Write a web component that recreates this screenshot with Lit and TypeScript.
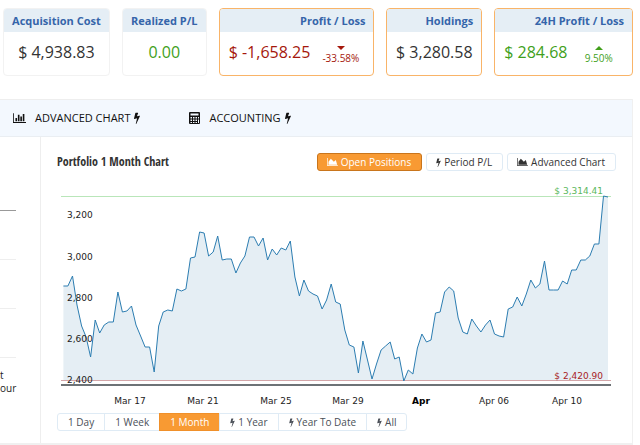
import { LitElement, html, svg, css, nothing } from "lit";
import { customElement, property, state } from "lit/decorators.js";
import { classMap } from "lit/directives/class-map.js";

const BOLT =
  "M885 566q18 20 7 44l-540 1157q-13 25-42 25-4 0-14-2-17-5-25.5-19t-4.5-30l197-808-406 101q-4 1-12 1-18 0-31-11-18-15-13-39l201-825q4-16 16-26t28-10h328q19 0 32 12.5t13 29.5q0 8-5 18l-171 463 396-98q8-2 12-2 19 0 34 15z";

const bolt = html`<svg class="bolt" viewBox="0 0 896 1792" aria-hidden="true"><path d=${BOLT} /></svg>`;
const area = html`<svg class="area" viewBox="0 0 2048 1536" aria-hidden="true">
  <path d="M2048 1408v128H0V0h128v1408zM1664 384l256 896H256V704l448-576 576 576z" />
</svg>`;
const bars = html`<svg class="bars" viewBox="0 0 2048 1536" aria-hidden="true">
  <path d="M2048 1408v128H0V0h128v1408zM384 768h256v512H384zM768 256h256v1024H768zM1152 512h256v768h-256zM1536 128h256v1152h-256z" />
</svg>`;
const calculator = html`<svg class="calc" viewBox="0 0 22 24" aria-hidden="true">
  <path fill-rule="evenodd" d="M2 0h18q2 0 2 2v20q0 2-2 2H2q-2 0-2-2V2q0-2 2-2zM3 3v4h16V3zM3 10v3h3v-3zM8 10v3h3v-3zM13 10v3h3v-3zM18 10v3h2v-3zM3 15v3h3v-3zM8 15v3h3v-3zM13 15v3h3v-3zM3 20v2h3v-2zM8 20v2h3v-2zM13 20v2h3v-2zM18 15v7h2v-7z" />
</svg>`;

interface Stat {
  label: string;
  value: string;
  tone: "plain" | "gain" | "loss";
  change?: string;
  accent?: boolean;
}

const STATS: Stat[] = [
  { label: "Acquisition Cost", value: "$ 4,938.83", tone: "plain" },
  { label: "Realized P/L", value: "0.00", tone: "gain" },
  { label: "Profit / Loss", value: "$ -1,658.25", tone: "loss", change: "-33.58%", accent: true },
  { label: "Holdings", value: "$ 3,280.58", tone: "plain", accent: true },
  { label: "24H Profit / Loss", value: "$ 284.68", tone: "gain", change: "9.50%", accent: true },
];

/* Line heights below the top of the plot, one sample every six hours. */
const SAMPLES = [
  106, 106, 96, 125, 146, 157, 177, 140, 153, 145, 142, 142, 112, 132, 131, 126, 145, 156, 167, 167,
  192, 146, 132, 130, 131, 109, 111, 109, 78, 77, 52, 53, 76, 72, 56, 80, 79, 79, 93, 83,
  76, 57, 57, 66, 58, 80, 69, 75, 68, 70, 61, 97, 116, 100, 111, 114, 116, 129, 120, 104,
  122, 124, 150, 165, 167, 193, 161, 180, 199, 184, 170, 166, 162, 179, 177, 201, 190, 194, 168, 154,
  162, 160, 133, 132, 112, 107, 111, 138, 152, 154, 139, 146, 152, 145, 140, 154, 156, 157, 129, 127,
  117, 126, 114, 100, 108, 104, 81, 110, 110, 110, 101, 104, 90, 90, 80, 80, 76, 64, 64, 16, 17,
];

const Y_TICKS = [
  { label: "3,200", y: 38 },
  { label: "3,000", y: 80 },
  { label: "2,800", y: 121 },
  { label: "2,600", y: 162 },
  { label: "2,400", y: 203 },
];

const X_TICKS = ["Mar 17", "Mar 21", "Mar 25", "Mar 29", "Apr", "Apr 06", "Apr 10"];

@customElement("stat-card")
class StatCard extends LitElement {
  @property({ attribute: false }) stat!: Stat;

  static styles = css`
    :host { display: block; min-width: 0; }
    .card { height: 66px; border: 1px solid #f2f2f2; border-radius: 4px; overflow: hidden; background: #fff; }
    .accent { border-color: #f9b468; }
    .label { margin: 0; height: 23px; padding: 0 8px; background: #e5eef5; color: #3565aa; font-size: 11px; font-weight: 700; line-height: 24px; text-align: center; white-space: nowrap; }
    .accent .label { text-align: right; }
    .body { display: flex; align-items: center; justify-content: center; height: 40px; font-size: 16px; line-height: 22px; white-space: nowrap; }
    .split { padding: 0 2px 0 9px; }
    .plain { color: #333; }
    .gain { color: #419f1b; }
    .loss { color: #a5180c; }
    .change { flex: 1; display: flex; flex-direction: column; align-items: center; gap: 2px; font-size: 10px; line-height: 13px; padding-top: 6px; }
    .caret { width: 8px; height: 4px; fill: currentColor; }
  `;

  render() {
    const s = this.stat;
    return html`<section class=${classMap({ card: true, accent: !!s.accent })}>
      <h2 class="label">${s.label}</h2>
      <div class=${classMap({ body: true, [s.tone]: true, split: !!s.change })}>
        <span>${s.value}</span>
        ${s.change
          ? html`<span class="change">
              <svg class="caret" viewBox="0 0 8 4" aria-hidden="true">
                <path d=${s.tone === "loss" ? "M0 0h8L4 4z" : "M0 4h8L4 0z"} />
              </svg>
              ${s.change}
            </span>`
          : nothing}
      </div>
    </section>`;
  }
}

@customElement("portfolio-chart")
class PortfolioChart extends LitElement {
  static styles = css`
    :host { display: block; }
    .plot { display: block; width: 100%; height: auto; font-family: "DejaVu Sans", Verdana, sans-serif; font-size: 9px; }
    .fill { fill: #e5eef4; }
    .line { fill: none; stroke: #2c7db1; stroke-width: 1; stroke-linejoin: round; }
    .high { stroke: #b9e6b9; stroke-width: 1; }
    .low { stroke: #d3a5a8; stroke-width: 1; }
    .axis { stroke: #6d7276; stroke-width: 2; }
    .tick { fill: #222; }
    .date { fill: #222; text-anchor: middle; }
    .month { fill: #000; font-weight: 700; }
    .max { fill: #5cb85c; text-anchor: end; }
    .min { fill: #a8221f; text-anchor: end; }
  `;

  render() {
    const step = 544.6 / (SAMPLES.length - 1);
    const points = SAMPLES.map((y, i) => `${(6.4 + i * step).toFixed(1)},${y}`);
    return html`<svg class="plot" viewBox="0 0 559 228" role="img" aria-label="Portfolio value over one month">
      <path class="fill" d=${`M6.4,200L${points.join("L")}L551,200z`} />
      <path class="high" d="M4 16.5H554" />
      <path class="low" d="M4 200.5H554" />
      <path class="axis" d="M4 205H554" />
      <polyline class="line" points=${points.join(" ")} />
      ${Y_TICKS.map((t) => svg`<text class="tick" x="10" y=${t.y}>${t.label}</text>`)}
      ${X_TICKS.map(
        (t, i) => svg`<text class=${t === "Apr" ? "date month" : "date"} x=${Math.round(73 + i * 72.8)} y="224">${t}</text>`
      )}
      <text class="max" x="546" y="14">$ 3,314.41</text>
      <text class="min" x="546" y="199">$ 2,420.90</text>
    </svg>`;
  }
}

@customElement("app-root")
class AppRoot extends LitElement {
  @state() private view = "Open Positions";
  @state() private range = "1 Month";

  static styles = css`
    :host { display: block; overflow: hidden; padding-top: 8px; background: #fff; color: #222; font-family: "Open Sans", "Noto Sans", sans-serif; }
    .stats { display: grid; grid-template-columns: 107fr 85fr 156fr 96fr 139fr; gap: 12px; margin: 0 7px 0 3px; }
    .panel { margin: 23px 7px 0 0; border-right: 1px solid #f0f0f0; border-bottom: 2px solid #f0f0f0; }
    .tabs { display: flex; align-items: center; gap: 49px; height: 36px; padding-left: 13px; background: #f3f8fe; border-top: 1px solid #eee; border-bottom: 1px solid #eaeef2; }
    .tab { display: flex; align-items: center; color: #111; font-size: 11px; line-height: 14px; text-decoration: none; white-space: nowrap; }
    .tab .bolt { height: 12px; width: 6px; margin-left: 4px; }
    svg { fill: currentColor; flex: none; }
    .bars { width: 13px; height: 10px; margin-right: 9px; }
    .calc { width: 11px; height: 12px; margin-right: 9px; }
    .columns { display: flex; }
    .side { flex: 0 0 40px; border-right: 1px solid #eee; }
    .rows { width: 16px; padding-top: 25px; }
    .row { height: 48px; border-bottom: 1px solid #eee; }
    .head { border-color: #999; }
    .note { margin: 0; padding-top: 11px; font-size: 10px; line-height: 13px; }
    .main { flex: 1; min-width: 0; padding: 16px 16px 12px; }
    .bar { display: flex; align-items: center; justify-content: space-between; height: 18px; }
    .title { margin: 0; font-family: "Open Sans Condensed", "Noto Sans Condensed", "Roboto Condensed", "Liberation Sans Narrow", "Open Sans", sans-serif; font-size: 12px; line-height: 18px; font-weight: 700; color: #333; white-space: nowrap; }
    .views { display: flex; gap: 4px; }
    button { display: flex; align-items: center; justify-content: center; gap: 3px; box-sizing: border-box; height: 18px; margin: 0; padding: 0 10px; border: 1px solid #dfebf5; border-radius: 3px; background: #fff; color: #333; font: 10px/16px "Open Sans", "Noto Sans", sans-serif; white-space: nowrap; }
    button .bolt { width: 5px; height: 9px; }
    .area { width: 11px; height: 8px; }
    .views button { padding: 0 10px 0 9px; }
    .views .on { background: #f89a33; border-color: #c9751c; color: #fff; }
    .ranges { display: flex; margin-top: 5px; }
    .ranges button { margin-right: -1px; border-radius: 0; color: #4a4f57; }
    .ranges button:first-child { border-radius: 3px 0 0 3px; }
    .ranges button:last-child { border-radius: 0 3px 3px 0; }
    .ranges .on { background: #f89a33; border-color: #f0902a; color: #fff; }
    .chart { margin-top: 9px; }
  `;

  private views = [
    { name: "Open Positions", icon: area },
    { name: "Period P/L", icon: bolt },
    { name: "Advanced Chart", icon: area },
  ];

  private ranges = [
    { name: "1 Day", pro: false },
    { name: "1 Week", pro: false },
    { name: "1 Month", pro: false },
    { name: "1 Year", pro: true },
    { name: "Year To Date", pro: true },
    { name: "All", pro: true },
  ];

  render() {
    return html`
      <div class="stats">${STATS.map((s) => html`<stat-card .stat=${s}></stat-card>`)}</div>
      <div class="panel">
        <nav class="tabs">
          <a class="tab" href="#chart">${bars}ADVANCED CHART${bolt}</a>
          <a class="tab" href="#accounting">${calculator}ACCOUNTING${bolt}</a>
        </nav>
        <div class="columns">
          <aside class="side">
            <div class="rows">
              <div class="row head"></div>
              <div class="row"></div>
              <div class="row"></div>
              <div class="row"></div>
              <p class="note">t<br />our</p>
            </div>
          </aside>
          <main class="main">
            <div class="bar">
              <h1 class="title">Portfolio 1 Month Chart</h1>
              <div class="views">
                ${this.views.map(
                  (v) => html`<button type="button" class=${classMap({ on: v.name === this.view })} @click=${() => (this.view = v.name)}>${v.icon}${v.name}</button>`
                )}
              </div>
            </div>
            <portfolio-chart class="chart"></portfolio-chart>
            <div class="ranges">
              ${this.ranges.map(
                (r) => html`<button type="button" class=${classMap({ on: r.name === this.range })} @click=${() => (this.range = r.name)}>${r.pro ? bolt : nothing}${r.name}</button>`
              )}
            </div>
          </main>
        </div>
      </div>
    `;
  }
}
